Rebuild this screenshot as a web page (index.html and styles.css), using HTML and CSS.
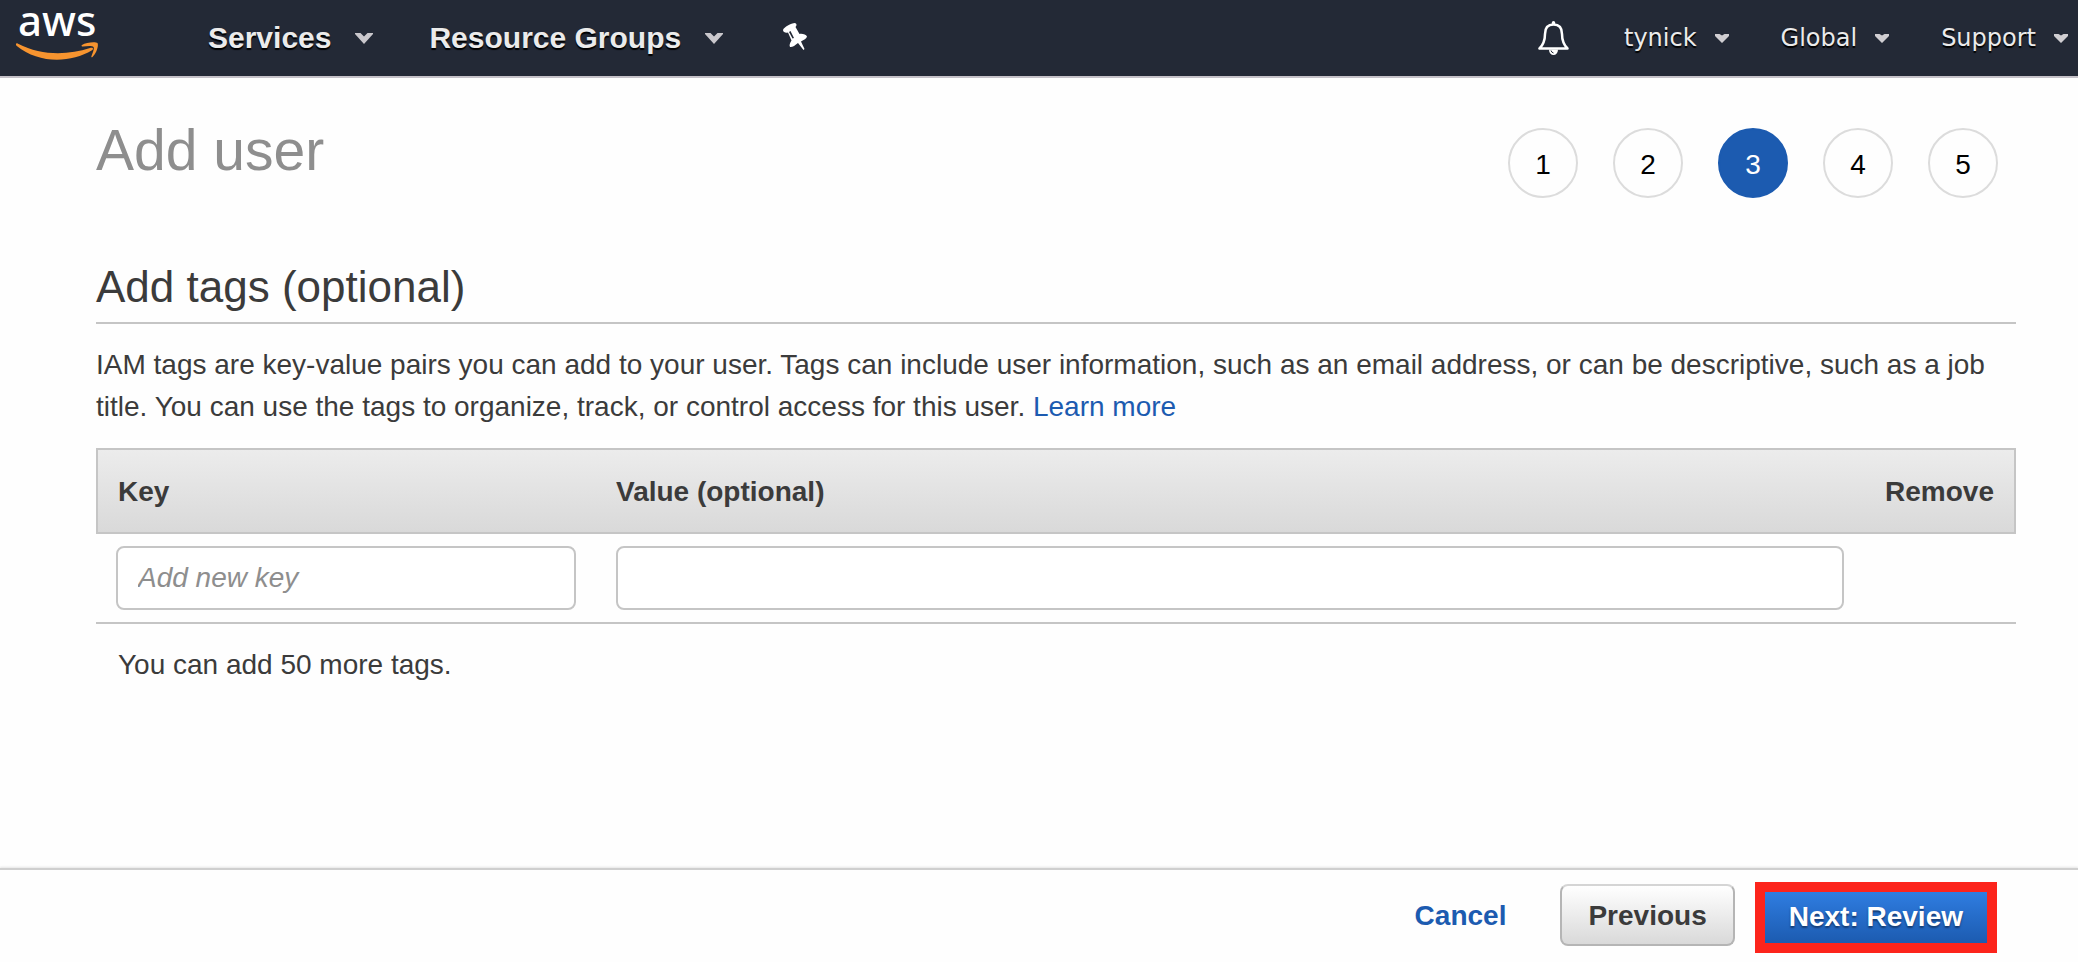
FILE: index.html
```html
<!DOCTYPE html>
<html lang="en">
<head>
<meta charset="utf-8">
<title>Add user</title>
<link rel="stylesheet" href="styles.css">
</head>
<body>
<header class="topbar">
  <a class="logo" href="#" aria-label="AWS home">
    <span class="logo-word">aws</span>
    <svg class="logo-smile" viewBox="0 0 82 18" preserveAspectRatio="none" aria-hidden="true">
      <path d="M0 2.200C0 1 1 1 2 1.700C26 14 52 13 74 6C77 5 78 7 76 8.300C54 21.500 22 21.500 .8 4C0 3.300 0 2.800 0 2.200Z"/>
      <path d="M66 3C70 0 80 -.5 81.500 1C83 4 80 12 76.500 15C75.500 15.600 75 15 75.500 14C77 10.500 78.500 6.500 77.500 5C76.500 3.500 71 4 67 4.500C65.500 4.600 65 3.800 66 3Z"/>
    </svg>
  </a>
  <nav class="nav-main">
    <button class="nav-item" type="button">Services <svg class="caret-main" viewBox="0 0 18 11" aria-hidden="true"><path d="M0 0H5.500L9 3.500L12.500 0H18V1L9 11L0 1Z"/></svg></button>
    <button class="nav-item" type="button">Resource Groups <svg class="caret-main" viewBox="0 0 18 11" aria-hidden="true"><path d="M0 0H5.500L9 3.500L12.500 0H18V1L9 11L0 1Z"/></svg></button>
    <button class="nav-item" type="button" aria-label="Pin shortcuts">
      <svg class="pin" viewBox="0 0 24 27" aria-hidden="true"><path fill-rule="evenodd" d="M0 7C1 4 8 0 12 0C14 .5 14 2.500 12.500 4L16.500 11C19.500 10.500 23 11.500 24 13.500C23.500 15.500 21 17 18 18.500L21.500 26L20.500 27L15 20C12 22.500 9 24.500 7 24C6 22 7 20 8.500 17.500L5 9.500C3 10 0 9.500 0 7ZM6 9L9.500 15.500L11 15L7.500 8Z"/></svg>
    </button>
  </nav>
  <nav class="nav-account">
    <button class="account-item" type="button" aria-label="Notifications">
      <svg class="bell" viewBox="0 0 31 34" aria-hidden="true">
        <path class="bell-body" d="M15.500 3.500C9 3.500 7 8 7 13C7 20 5 24 1.500 27.500H29.500C26 24 24 20 24 13C24 8 22 3.500 15.500 3.500Z"/>
        <path class="bell-fill" d="M13.800 3V1.500A1.700 1.500 0 0 1 17.200 1.500V3ZM11 28.500H20A4.500 5.500 0 0 1 11 28.500Z"/>
        <path class="bell-shade" d="M13 29.500Q13.500 31.500 15.500 32"/>
      </svg>
    </button>
    <button class="account-item" type="button">tynick <svg class="caret-small" viewBox="0 0 14 9" aria-hidden="true"><path d="M0 0H4.500L7 1.500L9.500 0H14V2L7 9L0 2Z"/></svg></button>
    <button class="account-item" type="button">Global <svg class="caret-small" viewBox="0 0 14 9" aria-hidden="true"><path d="M0 0H4.500L7 1.500L9.500 0H14V2L7 9L0 2Z"/></svg></button>
    <button class="account-item" type="button">Support <svg class="caret-small" viewBox="0 0 14 9" aria-hidden="true"><path d="M0 0H4.500L7 1.500L9.500 0H14V2L7 9L0 2Z"/></svg></button>
  </nav>
</header>
<main class="content">
  <div class="title-row">
    <h1 class="page-title">Add user</h1>
    <ol class="steps">
      <li class="step">1</li>
      <li class="step">2</li>
      <li class="step step-current" aria-current="step">3</li>
      <li class="step">4</li>
      <li class="step">5</li>
    </ol>
  </div>
  <h2 class="section-title">Add tags (optional)</h2>
  <p class="intro">IAM tags are key-value pairs you can add to your user. Tags can include user information, such as an email address, or can be descriptive, such as a job title. You can use the tags to organize, track, or control access for this user. <a class="link" href="#">Learn more</a></p>
  <table class="tags">
    <thead>
      <tr><th class="col-key" id="key-label">Key</th><th class="col-value" id="value-label">Value (optional)</th><th class="col-remove">Remove</th></tr>
    </thead>
    <tbody>
      <tr>
        <td class="cell-key"><input class="field" type="text" placeholder="Add new key" aria-labelledby="key-label"></td>
        <td class="cell-value"><input class="field" type="text" aria-labelledby="value-label"></td>
        <td></td>
      </tr>
    </tbody>
  </table>
  <p class="remaining">You can add 50 more tags.</p>
</main>
<footer class="actions">
  <a class="cancel" href="#">Cancel</a>
  <button class="button button-plain" type="button">Previous</button>
  <div class="highlight"><button class="button button-primary" type="button">Next: Review</button></div>
</footer>
</body>
</html>
```
FILE: styles.css
```css
* { box-sizing: border-box; }

body {
  margin: 0;
  min-height: 100vh;
  display: flex;
  flex-direction: column;
  background: #fefefe;
  color: #3b3b3b;
  font: 28px/42px "Liberation Sans", Arial, sans-serif;
}

button { font: inherit; cursor: pointer; }

.topbar {
  display: flex;
  align-items: center;
  height: 78px;
  padding: 0 10px 0 16px;
  background: #232936;
  border-bottom: 2px solid #c5c1c8;
}

.logo {
  display: flex;
  flex-direction: column;
  align-self: flex-start;
  gap: 2px;
  width: 82px;
  margin-right: 110px;
  color: #fff;
  text-decoration: none;
}

.logo-word {
  padding-left: 2px;
  font: 500 42px/40px "Noto Sans", sans-serif;
}

.logo-smile { width: 82px; height: 18px; fill: #f7942f; }

.nav-main { display: flex; gap: 56px; }

.nav-item, .account-item {
  display: flex;
  align-items: center;
  padding: 0;
  border: 0;
  background: none;
  color: #ebebeb;
  text-shadow: 0 2px 1px #000;
}

.nav-item { gap: 24px; font-size: 30px; font-weight: bold; }
.caret-main { width: 18px; height: 11px; fill: #c9c7cc; }
.pin { width: 24px; height: 27px; margin: 0 0 4px 4px; fill: #fff; }

.nav-account { display: flex; gap: 52px; margin-left: auto; }
.account-item { gap: 18px; font-family: "DejaVu Sans", Verdana, sans-serif; font-size: 24px; }
.caret-small { width: 14px; height: 9px; fill: #d0ced2; }
.bell { width: 31px; height: 34px; margin-right: 3px; }
.bell-body { fill: none; stroke: #fff; stroke-width: 2.500; stroke-linejoin: round; }
.bell-fill { fill: #fff; }
.bell-shade { fill: none; stroke: #232936; stroke-width: 1; }

.content { flex: 1; padding: 50px 62px 0 96px; }

.title-row {
  display: flex;
  justify-content: space-between;
  align-items: flex-start;
  padding-right: 18px;
}

.page-title { margin: 0; color: #8e8e8e; font-size: 57px; font-weight: normal; line-height: 44px; }

.steps { display: flex; gap: 35px; margin: 0; padding: 0; list-style: none; }

.step {
  width: 70px;
  height: 70px;
  border: 2px solid #dcdcdc;
  border-radius: 50%;
  color: #000;
  line-height: 70px;
  text-align: center;
}

.step-current { border-color: #1c5bb0; background: #1c5bb0; color: #fff; }

.section-title {
  margin: 62px 0 20px;
  padding-bottom: 8px;
  border-bottom: 2px solid #c5c5c5;
  font-size: 44px;
  font-weight: normal;
  line-height: 54px;
}

.intro { margin: 0 0 20px; }
.link { color: #1c5bb0; text-decoration: none; }

.tags { width: 100%; border-collapse: separate; border-spacing: 0; table-layout: fixed; }

.tags th {
  height: 86px;
  padding: 2px 20px 0;
  border: solid #c5c5c5;
  border-width: 2px 0;
  background: linear-gradient(#ececec, #d9d9d9);
  text-align: left;
}

.tags .col-key { width: 500px; border-left-width: 2px; }
.tags .col-remove { width: 172px; border-right-width: 2px; text-align: right; }
.tags td { padding: 12px 20px; border-bottom: 2px solid #c5c5c5; }
.tags .cell-value { padding-right: 0; }

.field {
  display: block;
  width: 100%;
  height: 64px;
  padding: 0 20px;
  border: 2px solid #c5c5c5;
  border-radius: 8px;
  background: #fff;
  color: inherit;
  font: inherit;
}

.field::placeholder { color: #8e8e8e; font-style: italic; opacity: 1; }

.remaining { margin: 20px 22px; }

.actions {
  display: flex;
  justify-content: flex-end;
  align-items: flex-start;
  padding: 12px 81px 9px;
  border-top: 2px solid #cfcfcf;
  box-shadow: 0 -1px 2px #e5e5e5;
  font-weight: bold;
}

.cancel { margin-right: 54px; padding-top: 13px; color: #1c5bb0; text-decoration: none; }

.button {
  border: 2px solid #b5b5b5;
  border-top-color: #d5d5d5;
  border-radius: 8px;
  background: linear-gradient(#fff, #d9d9d9);
  color: #3b3b3b;
}

.button-plain { height: 62px; margin-top: 2px; padding: 2px 26px 0; }

.highlight { margin-left: 20px; border: 10px solid #fc241c; }

.button-primary {
  display: block;
  height: 51px;
  padding: 0 24px 2px;
  border: 0;
  border-radius: 0;
  background: linear-gradient(#2f7de1, #1c5bb0);
  color: #fff;
  text-shadow: 0 2px 2px #143a70;
}
```
